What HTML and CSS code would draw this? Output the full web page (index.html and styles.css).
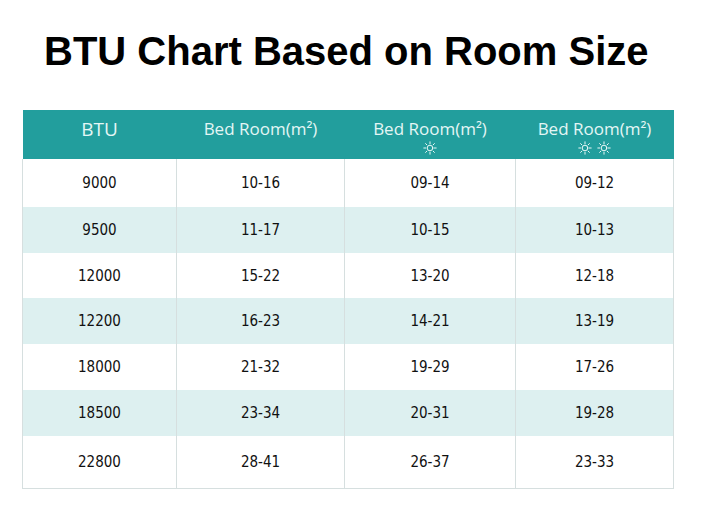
FILE: index.html
```html
<!DOCTYPE html>
<html lang="en">
<head>
<meta charset="utf-8">
<title>BTU Chart Based on Room Size</title>
<link rel="stylesheet" href="styles.css">
</head>
<body>
<div class="page">
  <h1 class="title">BTU Chart Based on Room Size</h1>
  <table class="chart">
    <colgroup>
      <col class="c1"><col class="c2"><col class="c3"><col class="c4">
    </colgroup>
    <thead>
      <tr class="head">
        <th><div class="ht ht-btu">BTU</div></th>
        <th><div class="ht">Bed Room(m²)</div></th>
        <th><div class="ht">Bed Room(m²)</div>
          <div class="suns">
            <svg class="sun" viewBox="0 0 14 14"><circle cx="7" cy="7" r="2.8"/><path d="M7 0.8v2M7 11.2v2M0.8 7h2M11.2 7h2M2.6 2.6l1.3 1.3M10.1 10.1l1.3 1.3M2.6 11.4l1.3-1.3M10.1 3.9l1.3-1.3"/></svg>
          </div>
        </th>
        <th><div class="ht">Bed Room(m²)</div>
          <div class="suns">
            <svg class="sun" viewBox="0 0 14 14"><circle cx="7" cy="7" r="2.8"/><path d="M7 0.8v2M7 11.2v2M0.8 7h2M11.2 7h2M2.6 2.6l1.3 1.3M10.1 10.1l1.3 1.3M2.6 11.4l1.3-1.3M10.1 3.9l1.3-1.3"/></svg>
            <svg class="sun" viewBox="0 0 14 14"><circle cx="7" cy="7" r="2.8"/><path d="M7 0.8v2M7 11.2v2M0.8 7h2M11.2 7h2M2.6 2.6l1.3 1.3M10.1 10.1l1.3 1.3M2.6 11.4l1.3-1.3M10.1 3.9l1.3-1.3"/></svg>
          </div>
        </th>
      </tr>
    </thead>
    <tbody>
      <tr class="r48"><td>9000</td><td>10-16</td><td>09-14</td><td>09-12</td></tr>
      <tr class="alt r46"><td>9500</td><td>11-17</td><td>10-15</td><td>10-13</td></tr>
      <tr class="r45"><td>12000</td><td>15-22</td><td>13-20</td><td>12-18</td></tr>
      <tr class="alt r46"><td>12200</td><td>16-23</td><td>14-21</td><td>13-19</td></tr>
      <tr class="r46"><td>18000</td><td>21-32</td><td>19-29</td><td>17-26</td></tr>
      <tr class="alt r46"><td>18500</td><td>23-34</td><td>20-31</td><td>19-28</td></tr>
      <tr class="r52"><td>22800</td><td>28-41</td><td>26-37</td><td>23-33</td></tr>
    </tbody>
  </table>
</div>
</body>
</html>
```
FILE: styles.css
```css
html, body {
  margin: 0;
  padding: 0;
  background: #ffffff;
}

.page {
  padding: 28px 0 0 22px;
}

.title {
  margin: 0 0 36px 22px;
  font-family: "Liberation Sans", Arial, sans-serif;
  font-weight: 700;
  font-size: 40px;
  line-height: 46px;
  color: #000000;
}

.chart {
  border-collapse: collapse;
  table-layout: fixed;
  width: 651px;
}

.c1 { width: 154px; }
.c2 { width: 168px; }
.c3 { width: 171px; }
.c4 { width: 158px; }

.head th {
  background: #229e9d;
  height: 49px;
  padding: 8px 0 0;
  vertical-align: top;
  box-sizing: border-box;
  font-family: "Open Sans", "Noto Sans", sans-serif;
  font-weight: 400;
  font-size: 17px;
  color: #e4f6f5;
  text-align: center;
}

.ht {
  line-height: 22px;
}

.ht-btu {
  font-size: 19px;
}

.suns {
  display: flex;
  justify-content: center;
  gap: 5px;
  margin-top: 1px;
  height: 14px;
}

.sun {
  width: 14px;
  height: 14px;
  fill: none;
  stroke: #eaf8f7;
  stroke-width: 1;
  stroke-linecap: round;
}

.chart td {
  padding: 0;
  text-align: center;
  vertical-align: middle;
  font-family: "DejaVu Sans", "Liberation Sans", Arial, sans-serif;
  font-stretch: condensed;
  font-size: 15px;
  color: #111111;
  border-left: 1px solid #d6dfdf;
  border-right: 1px solid #d6dfdf;
}

.chart tbody tr:last-child td {
  border-bottom: 1px solid #d6dfdf;
}

.alt td {
  background: #ddf0f0;
}

.r45 { height: 45px; }
.r46 { height: 46px; }
.r48 { height: 48px; }
.r52 { height: 52px; }
```
